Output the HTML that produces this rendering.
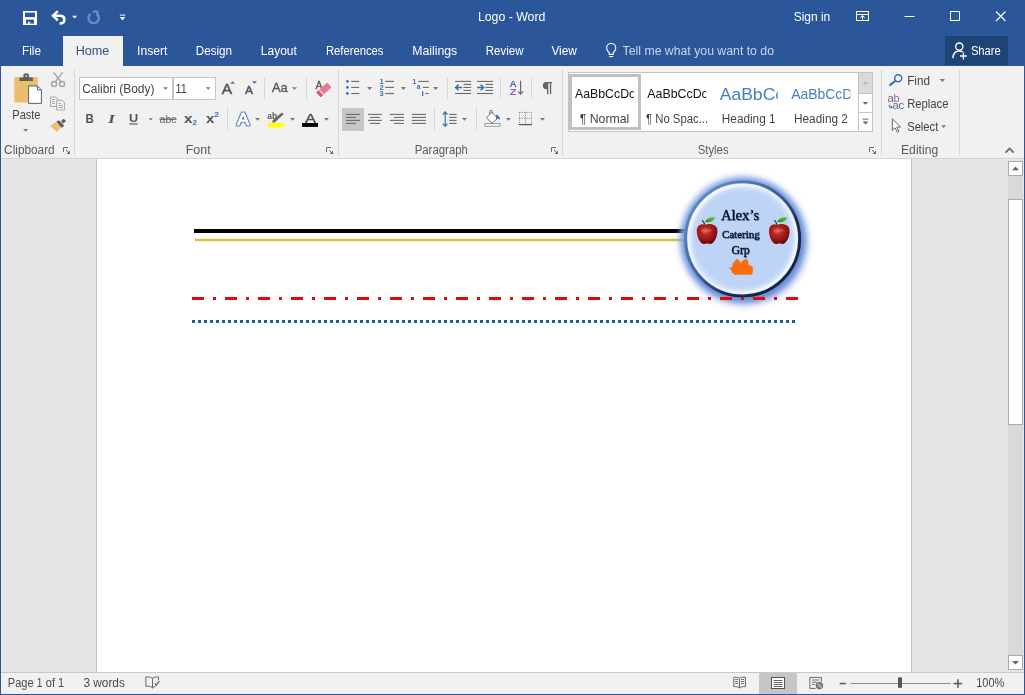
<!DOCTYPE html>
<html>
<head>
<meta charset="utf-8">
<title>Logo - Word</title>
<style>
*{box-sizing:border-box;margin:0;padding:0}
html,body{width:1025px;height:695px;overflow:hidden}
body{position:relative;background:#2b579a;font-family:"Liberation Sans",sans-serif;font-size:12px;color:#444}
.abs{position:absolute}
#hometab{left:63px;top:36px;width:60px;height:30px;background:#f1f1f1}
#share{left:945px;top:36px;width:63px;height:29px;background:#1e4475}
#ribbon{left:1px;top:66px;width:1023px;height:92px;background:#f1f1f1}
#ribline{left:1px;top:158px;width:1023px;height:1px;background:#d4d4d4}
#doc{left:1px;top:159px;width:1023px;height:513px;background:#e6e6e6}
#page{left:96px;top:159px;width:816px;height:513px;background:#fff;border-left:1px solid #c3c3c3;border-right:1px solid #c3c3c3}
#status{left:1px;top:672px;width:1023px;height:22px;background:#f1f1f1;border-top:1px solid #c8c8c8}
</style>
</head>
<body>
<div id="hometab" class="abs"></div>
<div id="share" class="abs"></div>
<div id="ribbon" class="abs"></div>
<div id="ribline" class="abs"></div>
<div id="doc" class="abs"></div>
<div id="page" class="abs"></div>
<div id="status" class="abs"></div>
<svg class="abs" style="left:0;top:0;will-change:transform" width="1025" height="695" viewBox="0 0 1025 695">
<defs>
<filter id="b3" x="-20%" y="-20%" width="140%" height="140%"><feGaussianBlur stdDeviation="3.4"/></filter>
<filter id="b35" x="-20%" y="-20%" width="140%" height="140%"><feGaussianBlur stdDeviation="4"/></filter>
<radialGradient id="face" cx="50%" cy="50%" r="50%">
<stop offset="0" stop-color="#bdd4f6"/>
<stop offset="0.82" stop-color="#bdd4f6"/>
<stop offset="0.90" stop-color="#cfdff9"/>
<stop offset="0.95" stop-color="#e4eefc"/>
<stop offset="0.985" stop-color="#c4d6f2"/>
<stop offset="1" stop-color="#86a3cf"/>
</radialGradient>
<linearGradient id="ring" x1="0.15" y1="0.15" x2="0.85" y2="0.85">
<stop offset="0" stop-color="#5b86bd"/>
<stop offset="0.45" stop-color="#3d6294"/>
<stop offset="0.7" stop-color="#203a60"/>
<stop offset="1" stop-color="#13253f"/>
</linearGradient>
<radialGradient id="apple" cx="42%" cy="36%" r="68%">
<stop offset="0" stop-color="#d96252"/>
<stop offset="0.28" stop-color="#bb2623"/>
<stop offset="0.68" stop-color="#961515"/>
<stop offset="1" stop-color="#4c0808"/>
</radialGradient>
<linearGradient id="leaf" x1="0" y1="1" x2="1" y2="0">
<stop offset="0" stop-color="#2f8f14"/>
<stop offset="1" stop-color="#6fca2e"/>
</linearGradient>
<filter id="tsh" x="-10%" y="-10%" width="130%" height="140%">
<feGaussianBlur stdDeviation="0.5"/>
</filter>

<linearGradient id="hl" x1="0.15" y1="0.15" x2="0.85" y2="0.85">
<stop offset="0" stop-color="#fff" stop-opacity="0.85"/>
<stop offset="0.35" stop-color="#fff" stop-opacity="0.25"/>
<stop offset="0.6" stop-color="#fff" stop-opacity="0.15"/>
<stop offset="1" stop-color="#fff" stop-opacity="0.75"/>
</linearGradient>
<filter id="b1" x="-10%" y="-10%" width="120%" height="120%"><feGaussianBlur stdDeviation="0.9"/></filter>
</defs>

<rect x="23" y="11" width="14" height="14" fill="#fff"/><rect x="25" y="12.6" width="10" height="4.5" fill="#2b579a"/><rect x="26" y="19.6" width="8" height="4" fill="#2b579a"/><rect x="28" y="21.8" width="2.2" height="1.8" fill="#fff"/>
<path d="M53.4 15.8H60.6A4.5 3.9 0 0 1 60.6 23.5H59.6" fill="none" stroke="#fff" stroke-width="2.5"/>
<path d="M57.8 11.2L53 15.8L57.8 20.4" fill="none" stroke="#fff" stroke-width="2.5"/>
<path d="M72.0 15.8H77.2L74.6 18.4Z" fill="#fff"/>
<path d="M96.6 13.6A5.2 5.2 0 1 1 90.4 13.9" fill="none" stroke="#6a8bc6" stroke-width="2.4"/>
<path d="M92.6 11.6H97.4V16.4" fill="none" stroke="#6a8bc6" stroke-width="2.2"/>
<rect x="119.8" y="14.6" width="5.4" height="1" fill="#fff" />
<path d="M119.8 17.0H125.2L122.5 20.4Z" fill="#fff"/>
<text x="477.9" y="21.0" font-family="Liberation Sans" font-size="12.3" font-weight="normal" font-style="normal" fill="#fff" textLength="67.5" lengthAdjust="spacingAndGlyphs" >Logo - Word</text>
<text x="793.7" y="21.0" font-family="Liberation Sans" font-size="12.3" font-weight="normal" font-style="normal" fill="#fff" textLength="36.6" lengthAdjust="spacingAndGlyphs" >Sign in</text>
<g fill="none" stroke="#fff" stroke-width="1"><rect x="856.5" y="11.5" width="12" height="9"/><line x1="856.5" y1="14.5" x2="868.5" y2="14.5"/><path d="M862.5 19.5V15.8M860.3 17.8L862.5 15.6L864.7 17.8"/></g>
<rect x="904.5" y="16" width="10" height="1" fill="#fff" />
<rect x="950.5" y="11.5" width="9" height="9" fill="none" stroke="#fff" stroke-width="1"/>
<path d="M996 11.5L1005.5 21M1005.5 11.5L996 21" fill="none" stroke="#fff" stroke-width="1.1"/>
<text x="22.0" y="55.0" font-family="Liberation Sans" font-size="12.3" font-weight="normal" font-style="normal" fill="#fff" textLength="19.1" lengthAdjust="spacingAndGlyphs" >File</text>
<text x="75.7" y="55.0" font-family="Liberation Sans" font-size="12.3" font-weight="normal" font-style="normal" fill="#34507f" textLength="33.7" lengthAdjust="spacingAndGlyphs" >Home</text>
<text x="137.0" y="55.0" font-family="Liberation Sans" font-size="12.3" font-weight="normal" font-style="normal" fill="#fff" textLength="30.4" lengthAdjust="spacingAndGlyphs" >Insert</text>
<text x="195.8" y="55.0" font-family="Liberation Sans" font-size="12.3" font-weight="normal" font-style="normal" fill="#fff" textLength="36.3" lengthAdjust="spacingAndGlyphs" >Design</text>
<text x="260.8" y="55.0" font-family="Liberation Sans" font-size="12.3" font-weight="normal" font-style="normal" fill="#fff" textLength="36.0" lengthAdjust="spacingAndGlyphs" >Layout</text>
<text x="325.9" y="55.0" font-family="Liberation Sans" font-size="12.3" font-weight="normal" font-style="normal" fill="#fff" textLength="57.6" lengthAdjust="spacingAndGlyphs" >References</text>
<text x="412.2" y="55.0" font-family="Liberation Sans" font-size="12.3" font-weight="normal" font-style="normal" fill="#fff" textLength="45.0" lengthAdjust="spacingAndGlyphs" >Mailings</text>
<text x="485.8" y="55.0" font-family="Liberation Sans" font-size="12.3" font-weight="normal" font-style="normal" fill="#fff" textLength="37.7" lengthAdjust="spacingAndGlyphs" >Review</text>
<text x="551.4" y="55.0" font-family="Liberation Sans" font-size="12.3" font-weight="normal" font-style="normal" fill="#fff" textLength="25.5" lengthAdjust="spacingAndGlyphs" >View</text>
<text x="622.6" y="55.0" font-family="Liberation Sans" font-size="12.3" font-weight="normal" font-style="normal" fill="#c9d6ea" textLength="151.4" lengthAdjust="spacingAndGlyphs" >Tell me what you want to do</text>
<g fill="none" stroke="#fff" stroke-width="1.1"><path d="M609.2 52.6C607.6 51.2 606.6 49.9 606.6 48A4.6 4.6 0 0 1 615.8 48C615.8 49.9 614.8 51.2 613.2 52.6V54.4H609.2Z"/><line x1="609.2" y1="56.6" x2="613.2" y2="56.6"/></g>
<g fill="none" stroke="#fff" stroke-width="1.3"><circle cx="959.3" cy="46.6" r="3.6"/><path d="M952.8 58.2C953.2 53.4 955.6 51 959.3 51C960.6 51 961.8 51.3 962.8 52"/><path d="M963.4 52.6V59.4M960 56H966.8"/></g>
<text x="970.9" y="55.0" font-family="Liberation Sans" font-size="12.3" font-weight="normal" font-style="normal" fill="#fff" textLength="29.9" lengthAdjust="spacingAndGlyphs" >Share</text>
<rect x="74" y="70" width="1" height="85" fill="#d5d5d5" />
<rect x="338" y="70" width="1" height="85" fill="#d5d5d5" />
<rect x="562" y="70" width="1" height="85" fill="#d5d5d5" />
<rect x="881" y="70" width="1" height="85" fill="#d5d5d5" />
<rect x="959" y="70" width="1" height="85" fill="#d5d5d5" />
<text x="4.1" y="154.0" font-family="Liberation Sans" font-size="12" font-weight="normal" font-style="normal" fill="#5a5a5a" textLength="50.6" lengthAdjust="spacingAndGlyphs" >Clipboard</text>
<text x="185.7" y="154.0" font-family="Liberation Sans" font-size="12" font-weight="normal" font-style="normal" fill="#5a5a5a" textLength="24.9" lengthAdjust="spacingAndGlyphs" >Font</text>
<text x="414.7" y="154.0" font-family="Liberation Sans" font-size="12" font-weight="normal" font-style="normal" fill="#5a5a5a" textLength="53.2" lengthAdjust="spacingAndGlyphs" >Paragraph</text>
<text x="697.7" y="154.0" font-family="Liberation Sans" font-size="12" font-weight="normal" font-style="normal" fill="#5a5a5a" textLength="30.9" lengthAdjust="spacingAndGlyphs" >Styles</text>
<text x="901.0" y="154.0" font-family="Liberation Sans" font-size="12" font-weight="normal" font-style="normal" fill="#5a5a5a" textLength="37.2" lengthAdjust="spacingAndGlyphs" >Editing</text>
<path d="M63.5 152V147.5H68" fill="none" stroke="#6b6b6b" stroke-width="1"/>
<path d="M66 150L69.2 153.2" fill="none" stroke="#6b6b6b" stroke-width="1"/>
<path d="M70 150.6V154H66.6Z" fill="#6b6b6b"/>
<path d="M326.5 152V147.5H331" fill="none" stroke="#6b6b6b" stroke-width="1"/>
<path d="M329 150L332.2 153.2" fill="none" stroke="#6b6b6b" stroke-width="1"/>
<path d="M333 150.6V154H329.6Z" fill="#6b6b6b"/>
<path d="M551.5 152V147.5H556" fill="none" stroke="#6b6b6b" stroke-width="1"/>
<path d="M554 150L557.2 153.2" fill="none" stroke="#6b6b6b" stroke-width="1"/>
<path d="M558 150.6V154H554.6Z" fill="#6b6b6b"/>
<path d="M869.5 152V147.5H874" fill="none" stroke="#6b6b6b" stroke-width="1"/>
<path d="M872 150L875.2 153.2" fill="none" stroke="#6b6b6b" stroke-width="1"/>
<path d="M876 150.6V154H872.6Z" fill="#6b6b6b"/>
<path d="M1005.6 152.6L1009.6 148.4L1013.6 152.6" fill="none" stroke="#666" stroke-width="1.7"/>
<rect x="14.2" y="77" width="23.6" height="25.4" rx="1" fill="#eabf6b"/>
<path d="M19.4 81V77.4H23.4V75.6A2.7 2.2 0 0 1 28.9 75.6V77.4H32.9V81Z" fill="#5f5f5f"/><circle cx="26.15" cy="76" r="1" fill="#eabf6b"/>
<path d="M28.6 85.9H37.4L41.4 89.9V103.4H28.6Z" fill="#fff" stroke="#5f5f5f" stroke-width="1"/><path d="M37.4 85.9V89.9H41.4" fill="none" stroke="#5f5f5f" stroke-width="1"/>
<text x="12.3" y="119.0" font-family="Liberation Sans" font-size="12.3" font-weight="normal" font-style="normal" fill="#444" textLength="28.2" lengthAdjust="spacingAndGlyphs" >Paste</text>
<path d="M23.0 128.9H28.2L25.6 131.6Z" fill="#777"/>
<g fill="none" stroke="#a6a6a6" stroke-width="1.5"><circle cx="54.1" cy="84.1" r="2.5"/><circle cx="62.1" cy="84.1" r="2.5"/><path d="M55.4 81.8L62.6 72.4M60.8 81.8L53.6 72.4"/></g>
<g fill="#f1f1f1" stroke="#a9a9a9" stroke-width="1"><path d="M50.5 96.9H55.6L58 99.3V106.5H50.5Z"/><path d="M56.5 100.3H62L64.6 102.9V110H56.5Z"/></g>
<g stroke="#a9a9a9" stroke-width="1"><path d="M52 99.5H55M52 101.5H55M52 103.5H55M58.2 103.5H61M58.2 105.5H63M58.2 107.5H63"/></g>
<path d="M50.2 125.9L55.6 122.2L60.8 127.4L57.1 132Z" fill="#eabf6b"/>
<path d="M56.2 121.8L59.1 120.2L64.3 125.7L61.4 127.8Z" fill="#5f5f5f"/>
<path d="M61 120.9L63.6 118.8L66.1 120.9L63.3 123.4Z" fill="#5f5f5f"/>
<rect x="79.5" y="77.5" width="93" height="22" fill="#fff" stroke="#c6c6c6"/>
<rect x="173.5" y="77.5" width="42" height="22" fill="#fff" stroke="#c6c6c6"/>
<text x="82.2" y="93.0" font-family="Liberation Sans" font-size="12.3" font-weight="normal" font-style="normal" fill="#444" textLength="72.2" lengthAdjust="spacingAndGlyphs" >Calibri (Body)</text>
<path d="M163.2 87.2H167.8L165.5 89.8Z" fill="#777"/>
<text x="175.6" y="93.0" font-family="Liberation Sans" font-size="12.3" font-weight="normal" font-style="normal" fill="#444" textLength="11.3" lengthAdjust="spacingAndGlyphs" >11</text>
<path d="M205.8 87.2H210.6L208.2 89.8Z" fill="#777"/>
<text x="221.8" y="94.0" font-family="Liberation Sans" font-size="14.2" font-weight="normal" font-style="normal" fill="#555" textLength="10.4" lengthAdjust="spacingAndGlyphs" stroke="#555" stroke-width="0.45">A</text>
<path d="M230.2 83.8H235.0L232.6 81.2Z" fill="#3e6fb3"/>
<text x="245.1" y="94.0" font-family="Liberation Sans" font-size="10.6" font-weight="normal" font-style="normal" fill="#555" textLength="8.0" lengthAdjust="spacingAndGlyphs" stroke="#555" stroke-width="0.45">A</text>
<path d="M252.0 81.2H257.0L254.5 83.8Z" fill="#3e6fb3"/>
<rect x="264" y="78" width="1" height="21" fill="#d5d5d5" />
<text x="271.9" y="92.0" font-family="Liberation Sans" font-size="12.4" font-weight="normal" font-style="normal" fill="#555" textLength="15.8" lengthAdjust="spacingAndGlyphs" stroke="#555" stroke-width="0.35">Aa</text>
<path d="M292.0 87.2H297.0L294.5 89.8Z" fill="#777"/>
<rect x="306" y="78" width="1" height="21" fill="#d5d5d5" />
<text x="315.4" y="89.0" font-family="Liberation Sans" font-size="11.4" font-weight="normal" font-style="normal" fill="#555" textLength="7.0" lengthAdjust="spacingAndGlyphs" stroke="#555" stroke-width="0.3">A</text>
<g transform="rotate(-42 324 89.5)"><rect x="316.4" y="86.4" width="14.6" height="6.6" rx="1" fill="#e8788c"/><rect x="316.4" y="86.4" width="3.6" height="6.6" fill="#d45b72"/><rect x="319.6" y="86.4" width="1" height="6.6" fill="#f1f1f1"/></g>
<text x="85.4" y="123.0" font-family="Liberation Sans" font-size="12.4" font-weight="bold" font-style="normal" fill="#555" textLength="8.3" lengthAdjust="spacingAndGlyphs" >B</text>
<text x="108.0" y="123.0" font-family="Liberation Serif" font-size="12.6" font-weight="bold" font-style="italic" fill="#555" textLength="7.0" lengthAdjust="spacingAndGlyphs" >I</text>
<text x="128.9" y="121.8" font-family="Liberation Sans" font-size="11.4" font-weight="bold" font-style="normal" fill="#555" textLength="9.2" lengthAdjust="spacingAndGlyphs" >U</text>
<rect x="129.3" y="123.4" width="8.4" height="1.1" fill="#555" />
<path d="M148.6 118.3H152.8L150.7 120.6Z" fill="#777"/>
<text x="159.6" y="122.6" font-family="Liberation Sans" font-size="11.6" font-weight="normal" font-style="normal" fill="#666" textLength="16.8" lengthAdjust="spacingAndGlyphs" >abc</text>
<rect x="159.4" y="118.6" width="17.2" height="1.1" fill="#555" />
<text x="184.0" y="123.0" font-family="Liberation Sans" font-size="13" font-weight="bold" font-style="normal" fill="#555" textLength="8.6" lengthAdjust="spacingAndGlyphs" >x</text>
<text x="192.4" y="124.6" font-family="Liberation Sans" font-size="6.6" font-weight="bold" font-style="normal" fill="#3e6fb3" textLength="4.4" lengthAdjust="spacingAndGlyphs" >2</text>
<text x="206.1" y="123.0" font-family="Liberation Sans" font-size="13" font-weight="bold" font-style="normal" fill="#555" textLength="8.5" lengthAdjust="spacingAndGlyphs" >x</text>
<text x="214.2" y="117.2" font-family="Liberation Sans" font-size="6.6" font-weight="bold" font-style="normal" fill="#3e6fb3" textLength="4.6" lengthAdjust="spacingAndGlyphs" >2</text>
<rect x="227" y="108" width="1" height="22" fill="#d5d5d5" />
<g font-family="Liberation Sans" font-size="16.8" stroke-linejoin="round"><text x="237.2" y="124.6" fill="none" stroke="#7aa7e6" stroke-width="4.6" stroke-opacity="0.25" textLength="11.8" lengthAdjust="spacingAndGlyphs">A</text><text x="237.2" y="124.6" fill="none" stroke="#3e6fb3" stroke-width="2.7" textLength="11.8" lengthAdjust="spacingAndGlyphs">A</text><text x="237.2" y="124.6" fill="#fff" stroke="#fff" stroke-width="1.1" textLength="11.8" lengthAdjust="spacingAndGlyphs">A</text></g>
<path d="M255.2 117.9H260.0L257.6 120.7Z" fill="#777"/>
<text x="267.3" y="118.6" font-family="Liberation Sans" font-size="9.4" font-weight="bold" font-style="normal" fill="#555" textLength="9.9" lengthAdjust="spacingAndGlyphs" >ab</text>
<path d="M272.6 122.8L272.4 120.6L281.8 112.4L283.6 114.2L274.8 122.6Z" fill="#6b6b6b"/>
<rect x="267.9" y="123" width="15.9" height="4.3" fill="#ffff00" />
<path d="M290.1 117.9H295.0L292.6 120.7Z" fill="#777"/>
<text x="304.9" y="123.0" font-family="Liberation Sans" font-size="13.4" font-weight="normal" font-style="normal" fill="#555" textLength="11.0" lengthAdjust="spacingAndGlyphs" stroke="#555" stroke-width="0.45">A</text>
<rect x="302.1" y="123" width="15.9" height="3.9" fill="#000" />
<path d="M324.1 117.9H328.9L326.5 120.7Z" fill="#777"/>
<circle cx="347.4" cy="81.4" r="1.4" fill="#3e6fb3"/>
<rect x="351.2" y="80.85" width="8.0" height="1.1" fill="#6b6b6b" />
<circle cx="347.4" cy="87.4" r="1.4" fill="#3e6fb3"/>
<rect x="351.2" y="86.85" width="8.0" height="1.1" fill="#6b6b6b" />
<circle cx="347.4" cy="93.5" r="1.4" fill="#3e6fb3"/>
<rect x="351.2" y="92.95" width="8.0" height="1.1" fill="#6b6b6b" />
<path d="M367.1 87.1H372.1L369.6 89.9Z" fill="#777"/>
<text x="379.4" y="83.6" font-family="Liberation Sans" font-size="6.4" font-weight="bold" font-style="normal" fill="#3e6fb3" textLength="4.2" lengthAdjust="spacingAndGlyphs" >1</text>
<rect x="385.2" y="80.85" width="8.8" height="1.1" fill="#6b6b6b" />
<text x="379.4" y="89.6" font-family="Liberation Sans" font-size="6.4" font-weight="bold" font-style="normal" fill="#3e6fb3" textLength="4.2" lengthAdjust="spacingAndGlyphs" >2</text>
<rect x="385.2" y="86.85" width="8.8" height="1.1" fill="#6b6b6b" />
<text x="379.4" y="95.7" font-family="Liberation Sans" font-size="6.4" font-weight="bold" font-style="normal" fill="#3e6fb3" textLength="4.2" lengthAdjust="spacingAndGlyphs" >3</text>
<rect x="385.2" y="92.95" width="8.8" height="1.1" fill="#6b6b6b" />
<path d="M400.9 87.1H406.0L403.4 89.9Z" fill="#777"/>
<text x="412.4" y="83.6" font-family="Liberation Sans" font-size="6.4" font-weight="bold" font-style="normal" fill="#3e6fb3" textLength="3.8" lengthAdjust="spacingAndGlyphs" >1</text>
<rect x="418.2" y="80.85" width="10.6" height="1.1" fill="#6b6b6b" />
<text x="416.8" y="89.2" font-family="Liberation Sans" font-size="6.4" font-weight="bold" font-style="normal" fill="#3e6fb3" textLength="3.8" lengthAdjust="spacingAndGlyphs" >a</text>
<rect x="422.9" y="86.85" width="5.9" height="1.1" fill="#6b6b6b" />
<text x="421.4" y="95.6" font-family="Liberation Sans" font-size="6.4" font-weight="bold" font-style="normal" fill="#3e6fb3" textLength="2.4" lengthAdjust="spacingAndGlyphs" >i</text>
<rect x="425.4" y="92.95" width="3.4" height="1.1" fill="#6b6b6b" />
<path d="M433.0 87.1H438.1L435.6 89.9Z" fill="#777"/>
<rect x="447" y="78" width="1" height="21" fill="#d5d5d5" />
<rect x="455" y="80.85" width="16.1" height="1.1" fill="#6b6b6b" />
<rect x="463.5" y="83.85" width="7.6" height="1.1" fill="#6b6b6b" />
<rect x="463.5" y="86.85" width="7.6" height="1.1" fill="#6b6b6b" />
<rect x="463.5" y="89.85" width="7.6" height="1.1" fill="#6b6b6b" />
<rect x="455" y="92.95" width="16.1" height="1.1" fill="#6b6b6b" />
<rect x="477" y="80.85" width="16.1" height="1.1" fill="#6b6b6b" />
<rect x="485.5" y="83.85" width="7.6" height="1.1" fill="#6b6b6b" />
<rect x="485.5" y="86.85" width="7.6" height="1.1" fill="#6b6b6b" />
<rect x="485.5" y="89.85" width="7.6" height="1.1" fill="#6b6b6b" />
<rect x="477" y="92.95" width="16.1" height="1.1" fill="#6b6b6b" />
<path d="M455.6 87.4H462.2M458.6 84.6L455.6 87.4L458.6 90.2" fill="none" stroke="#3e6fb3" stroke-width="1.5"/>
<path d="M477 87.4H483.6M480.6 84.6L483.6 87.4L480.6 90.2" fill="none" stroke="#3e6fb3" stroke-width="1.5"/>
<rect x="500" y="78" width="1" height="21" fill="#d5d5d5" />
<text x="509.5" y="86.5" font-family="Liberation Sans" font-size="9" font-weight="bold" font-style="normal" fill="#3e6fb3" textLength="7.2" lengthAdjust="spacingAndGlyphs" >A</text>
<text x="509.7" y="94.7" font-family="Liberation Sans" font-size="9" font-weight="bold" font-style="normal" fill="#9b5fb5" textLength="6.7" lengthAdjust="spacingAndGlyphs" >Z</text>
<path d="M520.6 80.8V94M518.2 91.4L520.6 94.2L523 91.4" fill="none" stroke="#6b6b6b" stroke-width="1.2"/>
<rect x="531" y="78" width="1" height="21" fill="#d5d5d5" />
<path d="M546.4 82H552V83.3H551.2V94.2H549.9V83.3H548.3V94.2H547V89.2H546.4A3.6 3.6 0 0 1 546.4 82Z" fill="#666"/>
<rect x="342" y="108" width="22" height="23" fill="#c6c6c6" />
<rect x="346.1" y="113.85" width="13.8" height="1.1" fill="#6b6b6b" />
<rect x="368" y="113.85" width="13.9" height="1.1" fill="#6b6b6b" />
<rect x="389.9" y="113.85" width="14.0" height="1.1" fill="#6b6b6b" />
<rect x="411.8" y="113.85" width="14.2" height="1.1" fill="#6b6b6b" />
<rect x="346.1" y="116.85" width="9.8" height="1.1" fill="#6b6b6b" />
<rect x="370" y="116.85" width="10" height="1.1" fill="#6b6b6b" />
<rect x="394" y="116.85" width="9.9" height="1.1" fill="#6b6b6b" />
<rect x="411.8" y="116.85" width="14.2" height="1.1" fill="#6b6b6b" />
<rect x="346.1" y="119.85" width="13.8" height="1.1" fill="#6b6b6b" />
<rect x="368" y="119.85" width="13.9" height="1.1" fill="#6b6b6b" />
<rect x="389.9" y="119.85" width="14.0" height="1.1" fill="#6b6b6b" />
<rect x="411.8" y="119.85" width="14.2" height="1.1" fill="#6b6b6b" />
<rect x="346.1" y="122.85" width="9.8" height="1.1" fill="#6b6b6b" />
<rect x="370" y="122.85" width="10" height="1.1" fill="#6b6b6b" />
<rect x="394" y="122.85" width="9.9" height="1.1" fill="#6b6b6b" />
<rect x="411.8" y="122.85" width="14.2" height="1.1" fill="#6b6b6b" />
<rect x="434" y="108" width="1" height="22" fill="#d5d5d5" />
<path d="M445.2 112V126.2M442.9 114.6L445.2 111.8L447.5 114.6M442.9 123.6L445.2 126.4L447.5 123.6" fill="none" stroke="#3e6fb3" stroke-width="1.2"/>
<rect x="449.2" y="113.85" width="7.4" height="1.1" fill="#6b6b6b" />
<rect x="449.2" y="116.85" width="7.4" height="1.1" fill="#6b6b6b" />
<rect x="449.2" y="119.85" width="7.4" height="1.1" fill="#6b6b6b" />
<rect x="449.2" y="122.85" width="7.4" height="1.1" fill="#6b6b6b" />
<path d="M461.8 117.9H467.0L464.4 120.7Z" fill="#777"/>
<rect x="476" y="108" width="1" height="22" fill="#d5d5d5" />
<path d="M486.4 117.8L491.8 112.4L497.6 118.2L492.2 123.2Z" fill="#fff" stroke="#6b6b6b" stroke-width="1"/>
<path d="M489.8 114.4V111.6A1.3 1.3 0 0 1 492.4 111.6V113" fill="none" stroke="#6b6b6b" stroke-width="1"/>
<path d="M496.2 114.8C498.6 115.2 500 116.8 500 120L497.8 118.2L496 119.6Z" fill="#3e6fb3"/>
<rect x="484.9" y="123.6" width="15" height="2.6" fill="#fff" stroke="#8a8a8a" stroke-width="0.9"/>
<path d="M505.9 117.9H511.0L508.4 120.7Z" fill="#777"/>
<g fill="none" stroke="#777" stroke-width="1" stroke-dasharray="1 1.4"><path d="M519.4 112.4H531.6M519.4 118.4H531.6M519.4 112.4V124M525.5 112.4V124M531.5 112.4V124"/></g>
<rect x="518.9" y="124" width="13" height="1.2" fill="#555" />
<path d="M539.9 117.9H545.0L542.5 120.7Z" fill="#777"/>
<rect x="568.5" y="72.5" width="304" height="59" fill="#fff" stroke="#c3c3c3"/>
<text x="575.0" y="98.0" font-family="Liberation Sans" font-size="12.6" font-weight="normal" font-style="normal" fill="#111" textLength="60.2" lengthAdjust="spacingAndGlyphs" >AaBbCcDc</text>
<rect x="633.6" y="86" width="6" height="15" fill="#fff" />
<rect x="570.5" y="75.5" width="69" height="53" fill="none" stroke="#c0c0c0" stroke-width="3"/>
<text x="579.7" y="123.0" font-family="Liberation Sans" font-size="12.3" font-weight="normal" font-style="normal" fill="#444" textLength="49.6" lengthAdjust="spacingAndGlyphs" >¶ Normal</text>
<text x="647.3" y="98.0" font-family="Liberation Sans" font-size="12.6" font-weight="normal" font-style="normal" fill="#111" textLength="60.5" lengthAdjust="spacingAndGlyphs" >AaBbCcDc</text>
<rect x="706.2" y="86" width="8" height="15" fill="#fff" />
<text x="646.0" y="123.0" font-family="Liberation Sans" font-size="12.3" font-weight="normal" font-style="normal" fill="#444" textLength="62.1" lengthAdjust="spacingAndGlyphs" >¶ No Spac...</text>
<text x="719.7" y="100.0" font-family="Liberation Sans" font-size="17.4" font-weight="normal" font-style="normal" fill="#4380c2" textLength="64.4" lengthAdjust="spacingAndGlyphs" >AaBbCc</text>
<rect x="777.8" y="84" width="10" height="20" fill="#fff" />
<text x="721.8" y="123.0" font-family="Liberation Sans" font-size="12.3" font-weight="normal" font-style="normal" fill="#444" textLength="53.8" lengthAdjust="spacingAndGlyphs" >Heading 1</text>
<text x="791.2" y="99.0" font-family="Liberation Sans" font-size="14.4" font-weight="normal" font-style="normal" fill="#4380c2" textLength="61.0" lengthAdjust="spacingAndGlyphs" >AaBbCcD</text>
<rect x="850.3" y="84" width="7.8" height="18" fill="#fff" />
<text x="794.0" y="123.0" font-family="Liberation Sans" font-size="12.3" font-weight="normal" font-style="normal" fill="#444" textLength="53.9" lengthAdjust="spacingAndGlyphs" >Heading 2</text>
<rect x="858" y="73" width="1" height="58" fill="#c3c3c3" />
<rect x="859" y="73" width="13" height="20.5" fill="#dadada" />
<rect x="859" y="93" width="13" height="1" fill="#c3c3c3" />
<rect x="859" y="112" width="13" height="1" fill="#c3c3c3" />
<path d="M862.6 84.2H868.4L865.5 81.3Z" fill="#b5b5b5"/>
<path d="M862.6 102.0H868.2L865.4 104.8Z" fill="#666"/>
<rect x="862.6" y="118.6" width="5.8" height="1" fill="#666" />
<path d="M862.6 121.4H868.4L865.5 124.6Z" fill="#666"/>
<circle cx="898.2" cy="78.3" r="3.5" fill="none" stroke="#3e6fb3" stroke-width="1.5"/><path d="M895.2 81L890.2 84.9" stroke="#3e6fb3" stroke-width="2.2" stroke-linecap="round"/>
<text x="907.2" y="85.0" font-family="Liberation Sans" font-size="12.3" font-weight="normal" font-style="normal" fill="#444" textLength="22.8" lengthAdjust="spacingAndGlyphs" >Find</text>
<path d="M939.8 79.0H945.0L942.4 82.0Z" fill="#777"/>
<text x="887.6" y="102.4" font-family="Liberation Sans" font-size="10.4" font-weight="normal" font-style="normal" fill="#6b6b6b" textLength="6.3" lengthAdjust="spacingAndGlyphs" >a</text>
<text x="893.6" y="102.4" font-family="Liberation Sans" font-size="10.4" font-weight="normal" font-style="normal" fill="#9b5fb5" textLength="6.0" lengthAdjust="spacingAndGlyphs" >b</text>
<text x="892.6" y="109.4" font-family="Liberation Sans" font-size="10.4" font-weight="normal" font-style="normal" fill="#6b6b6b" textLength="6.2" lengthAdjust="spacingAndGlyphs" >a</text>
<text x="898.3" y="109.4" font-family="Liberation Sans" font-size="10.4" font-weight="normal" font-style="normal" fill="#3e6fb3" textLength="6.1" lengthAdjust="spacingAndGlyphs" >c</text>
<path d="M889.4 104.6V107.2H892M890.8 105.8L892.2 107.2L890.8 108.6" fill="none" stroke="#3e6fb3" stroke-width="1"/>
<text x="907.2" y="108.0" font-family="Liberation Sans" font-size="12.3" font-weight="normal" font-style="normal" fill="#444" textLength="41.3" lengthAdjust="spacingAndGlyphs" >Replace</text>
<path d="M892.3 118.8V130.4L895.1 127.8L897.3 132.2L898.9 131.4L896.8 127.2L900.6 127Z" fill="#fff" stroke="#666" stroke-width="1"/>
<text x="907.2" y="131.0" font-family="Liberation Sans" font-size="12.3" font-weight="normal" font-style="normal" fill="#444" textLength="31.1" lengthAdjust="spacingAndGlyphs" >Select</text>
<path d="M941.2 125.2H946.0L943.6 128.0Z" fill="#777"/>
<rect x="1007" y="159" width="17" height="513" fill="#e6e6e6" />
<rect x="1008" y="176" width="15" height="479" fill="#d9d9d9" />
<rect x="1008.5" y="161.5" width="14" height="14" fill="#fff" stroke="#ababab"/>
<path d="M1012.0 170.2H1019.0L1015.5 166.6Z" fill="#666"/>
<rect x="1008.5" y="199.5" width="14" height="225" fill="#fff" stroke="#ababab"/>
<rect x="1008.5" y="655.5" width="14" height="14" fill="#fff" stroke="#ababab"/>
<path d="M1012.0 661.0H1019.0L1015.5 664.6Z" fill="#666"/>
<rect x="194" y="229" width="500" height="4" fill="#000" />
<rect x="195" y="238" width="498" height="4" fill="#fcf4c2" />
<rect x="195" y="239" width="498" height="2" fill="#deb74e" />
<line x1="192" y1="321.5" x2="796" y2="321.5" stroke="#12609e" stroke-width="3" stroke-dasharray="3 3"/>
<circle cx="742.6" cy="238.9" r="61.800000000000004" fill="#9ab6ee" filter="url(#b3)"/>
<circle cx="744.4" cy="241.9" r="61.2" fill="#6185d2" filter="url(#b35)"/>
<line x1="192" y1="298.5" x2="799" y2="298.5" stroke="#e00a0a" stroke-width="3" stroke-dasharray="12 9 3 9"/>
<circle cx="742.6" cy="238.9" r="57.2" fill="url(#face)"/>
<circle cx="742.6" cy="238.9" r="53.6" fill="none" stroke="url(#hl)" stroke-width="2.6" filter="url(#b1)"/>
<circle cx="742.6" cy="238.9" r="57.0" fill="none" stroke="url(#ring)" stroke-width="2.9"/>
<path d="M795.2 216.6A57.2 57.2 0 0 1 720.3 291.5" fill="none" stroke="#13253f" stroke-width="1.2" transform="translate(0.5 0.6)" opacity="0.8"/>
<g transform="translate(707.1 234)"><path d="M-2.3 -9.3C-5 -10.7 -10.3 -9.3 -10.3 -3C-10.3 3.5 -6.6 10 -3 10C-1.6 10 -1 9.6 0 9.6C1 9.6 1.6 10 3 10C6.6 10 10.3 3.5 10.3 -3C10.3 -9.3 4 -10.9 -2.3 -9.3Z" fill="url(#apple)"/>
<path d="M-2.3 -9.2C-2.9 -11 -3.8 -12.6 -4.9 -13.8" fill="none" stroke="#3b3430" stroke-width="1.2"/>
<path d="M-2.2 -12.2C-0.8 -15.6 3.6 -17.6 8.3 -16.4C6.4 -12.4 2.4 -10.8 -2.2 -12.2Z" fill="url(#leaf)"/>
<ellipse cx="-1" cy="-3.6" rx="5.2" ry="2.2" fill="#e88a78" opacity="0.35"/></g>
<g transform="translate(779.3 234)"><path d="M-2.3 -9.3C-5 -10.7 -10.3 -9.3 -10.3 -3C-10.3 3.5 -6.6 10 -3 10C-1.6 10 -1 9.6 0 9.6C1 9.6 1.6 10 3 10C6.6 10 10.3 3.5 10.3 -3C10.3 -9.3 4 -10.9 -2.3 -9.3Z" fill="url(#apple)"/>
<path d="M-2.3 -9.2C-2.9 -11 -3.8 -12.6 -4.9 -13.8" fill="none" stroke="#3b3430" stroke-width="1.2"/>
<path d="M-2.2 -12.2C-0.8 -15.6 3.6 -17.6 8.3 -16.4C6.4 -12.4 2.4 -10.8 -2.2 -12.2Z" fill="url(#leaf)"/>
<ellipse cx="-1" cy="-3.6" rx="5.2" ry="2.2" fill="#e88a78" opacity="0.35"/></g>
<text x="721.6" y="221.2" font-family="Liberation Serif" font-size="15.4" font-weight="normal" fill="#1a2a4a" opacity="0.55" filter="url(#tsh)" textLength="38.3" lengthAdjust="spacingAndGlyphs">Alex’s</text>
<text x="720.9" y="220.3" font-family="Liberation Serif" font-size="15.4" font-weight="normal" fill="#070f28" stroke="#070f28" stroke-width="0.3" textLength="38.3" lengthAdjust="spacingAndGlyphs">Alex’s</text>
<text x="722.6" y="238.7" font-family="Liberation Serif" font-size="11.4" font-weight="normal" fill="#1a2a4a" opacity="0.55" filter="url(#tsh)" textLength="37.9" lengthAdjust="spacingAndGlyphs">Catering</text>
<text x="721.9" y="237.8" font-family="Liberation Serif" font-size="11.4" font-weight="normal" fill="#070f28" stroke="#070f28" stroke-width="0.35" textLength="37.9" lengthAdjust="spacingAndGlyphs">Catering</text>
<text x="732.1" y="254.7" font-family="Liberation Serif" font-size="12.2" font-weight="normal" fill="#1a2a4a" opacity="0.55" filter="url(#tsh)" textLength="18.4" lengthAdjust="spacingAndGlyphs">Grp</text>
<text x="731.4" y="253.8" font-family="Liberation Serif" font-size="12.2" font-weight="normal" fill="#070f28" stroke="#070f28" stroke-width="0.35" textLength="18.4" lengthAdjust="spacingAndGlyphs">Grp</text>
<path d="M729.6 268.2L732.6 266.7L733 263.4L734.9 261.5L736.7 258.9L739 260.4L740.8 263.4L742.7 260.7L745 259.6L747.6 260L748.3 263L748 264.9L750.9 266L752.8 267.1L752.4 269.7L752.8 271.6L751.7 274.4H734.5L732.2 272.3L731.5 270.1Z" fill="#fb6d0a" stroke="#fb6d0a" stroke-width="0.5" stroke-linejoin="round"/>
<text x="7.8" y="687.0" font-family="Liberation Sans" font-size="12.3" font-weight="normal" font-style="normal" fill="#4a4a4a" textLength="56.4" lengthAdjust="spacingAndGlyphs" >Page 1 of 1</text>
<text x="83.4" y="687.0" font-family="Liberation Sans" font-size="12.3" font-weight="normal" font-style="normal" fill="#4a4a4a" textLength="41.5" lengthAdjust="spacingAndGlyphs" >3 words</text>
<g fill="none" stroke="#666" stroke-width="1"><path d="M152.5 678.2V688.4M152.5 678.2C150.6 676.9 148.2 676.7 145.9 677V686.3C148.2 686 150.6 686.3 152.5 687.6"/><path d="M152.5 678.2C153.6 677.3 155.4 676.8 158.6 677V680M152.5 687.6C153.4 687 154.4 686.6 155.6 686.4"/><path d="M154.8 683.4L156.4 685.2L159.4 680.8" stroke-width="1.2"/></g>
<rect x="759" y="673" width="38" height="21" fill="#c6c6c6" />
<g fill="none" stroke="#666" stroke-width="1"><path d="M739.5 678.4V688M739.5 678.4C737.8 677.2 735.8 677 733.8 677.2V686.6C735.8 686.4 737.8 686.7 739.5 687.9C741.2 686.7 743.2 686.4 745.4 686.6V677.2C743.2 677 741.2 677.2 739.5 678.4"/><path d="M735.2 679.5H738M735.2 681.5H738M735.2 683.5H738M741 679.5H744M741 681.5H744M741 683.5H744" stroke-width="0.9"/></g>
<g fill="none" stroke="#555" stroke-width="1"><rect x="771.5" y="677.5" width="13" height="11" fill="#fff"/><path d="M773.5 680.5H782.5M773.5 682.5H782.5M773.5 684.5H782.5M773.5 686.5H782.5" stroke-width="0.9"/></g>
<g fill="none" stroke="#666" stroke-width="1"><path d="M815.6 688.4H809.9V677.4H821.4V681.6"/><path d="M812 680H819.4M812 682.2H817M812 684.4H815.2" stroke-width="0.9"/><circle cx="819.4" cy="685.6" r="3.3" fill="#8a8a8a" stroke="#666"/><path d="M817.2 683.4L821.6 687.8" stroke="#f1f1f1" stroke-width="0.7"/></g>
<rect x="839.6" y="682.8" width="6.2" height="1.5" fill="#555" />
<rect x="850.6" y="683" width="100" height="1" fill="#8a8a8a" />
<rect x="898" y="677.4" width="4" height="10.4" fill="#555" />
<rect x="953.6" y="682.8" width="8.6" height="1.5" fill="#555" />
<rect x="957.2" y="679.2" width="1.5" height="8.6" fill="#555" />
<text x="976.2" y="687.0" font-family="Liberation Sans" font-size="12.3" font-weight="normal" font-style="normal" fill="#4a4a4a" textLength="28.1" lengthAdjust="spacingAndGlyphs" >100%</text>
</svg>
</body>
</html>
